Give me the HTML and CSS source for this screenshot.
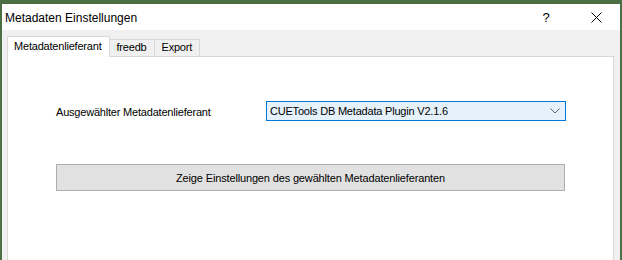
FILE: index.html
```html
<!DOCTYPE html>
<html lang="de">
	<head>
		<meta charset="UTF-8" />
		<title>Metadaten Einstellungen</title>
		<link rel="stylesheet" href="styles.css">
	</head>
	<body>
		<section class="dialog">
			<header class="titlebar">
				<span class="title">Metadaten Einstellungen</span>
				<span class="caption-btn help">?</span>
				<span class="caption-btn close">
					<svg width="11" height="11" viewBox="0 0 11 11">
						<path d="M0.5 0.5 L10.5 10.5 M10.5 0.5 L0.5 10.5" stroke="#000" stroke-width="1" />
					</svg>
				</span>
			</header>
			<div class="client">
				<!-- tab strip -->
				<div class="tabs">
					<div class="tab active">Metadatenlieferant</div>
					<div class="tab">freedb</div>
					<div class="tab">Export</div>
				</div>
				<div class="panel">
					<div class="row">
						<label class="label">Ausgewählter Metadatenlieferant</label>
						<div class="combo">
							<span>CUETools DB Metadata Plugin V2.1.6</span>
							<svg width="10" height="6" viewBox="0 0 10 6">
								<path d="M0.5 0.5 L5 5 L9.5 0.5" fill="none" stroke="#606060" stroke-width="1" />
							</svg>
						</div>
					</div>
					<button class="settings-btn">Zeige Einstellungen des gewählten Metadatenlieferanten</button>
				</div>
			</div>
		</section>
	</body>
</html>
```

FILE: styles.css
```css
* {
	box-sizing: border-box;
}
html,
body {
	height: 100%;
}
body {
	margin: 0;
	font-family: "Liberation Sans", Arial, sans-serif;
	background: #4c6e45;
	overflow: hidden;
}
.dialog {
	margin: 4px 2px 0 2px;
	height: calc(100% - 4px);
	background: #f0f0f0;
	display: flex;
	flex-direction: column;
}
.titlebar {
	height: 26px;
	background: #fff;
	display: flex;
	align-items: center;
	padding-left: 3px;
	font-size: 12px;
	color: #000;
}
.title {
	flex: 1;
	padding-top: 1px;
}
.caption-btn {
	display: flex;
	align-items: center;
	justify-content: center;
	height: 26px;
}
.help {
	width: 46px;
	font-size: 13px;
	margin-right: 4px;
}
.close {
	width: 46px;
	margin-right: 1px;
}
.client {
	flex: 1;
	padding: 6px 6px 0 5px;
	display: flex;
	flex-direction: column;
}
.tabs {
	display: flex;
	align-items: flex-end;
	height: 20px;
	padding-left: 2px;
}
.tab {
	font-size: 11px;
	letter-spacing: -0.2px;
	height: 17px;
	line-height: 15px;
	padding: 0 7px 0 7px;
	border: 1px solid #d9d9d9;
	border-bottom: none;
	border-left: none;
	background: #f0f0f0;
	color: #000;
}
.tab.active {
	height: 21px;
	line-height: 19px;
	background: #fff;
	border-left: 1px solid #d9d9d9;
	margin-left: -2px;
	margin-bottom: -1px;
	padding: 0 7px 0 6px;
	position: relative;
}
.panel {
	flex: 1;
	background: #fff;
	border: 1px solid #d9d9d9;
	border-bottom: none;
	padding: 44px 0 0 48px;
}
.row {
	display: flex;
	align-items: center;
	height: 20px;
}
.label {
	font-size: 11px;
	letter-spacing: -0.2px;
	width: 210px;
	padding-top: 1px;
	color: #000;
}
.combo {
	width: 300px;
	height: 20px;
	border: 1px solid #0078d7;
	background: #e5f1fb;
	display: flex;
	align-items: center;
	justify-content: space-between;
	padding: 0 5px 0 3px;
	font-size: 11px;
	letter-spacing: -0.2px;
	color: #000;
}
.settings-btn {
	display: block;
	margin-top: 43px;
	width: 509px;
	height: 27px;
	background: #e1e1e1;
	border: 1px solid #adadad;
	font-family: "Liberation Sans", Arial, sans-serif;
	font-size: 11px;
	letter-spacing: -0.15px;
	color: #000;
	padding: 0;
}
```
